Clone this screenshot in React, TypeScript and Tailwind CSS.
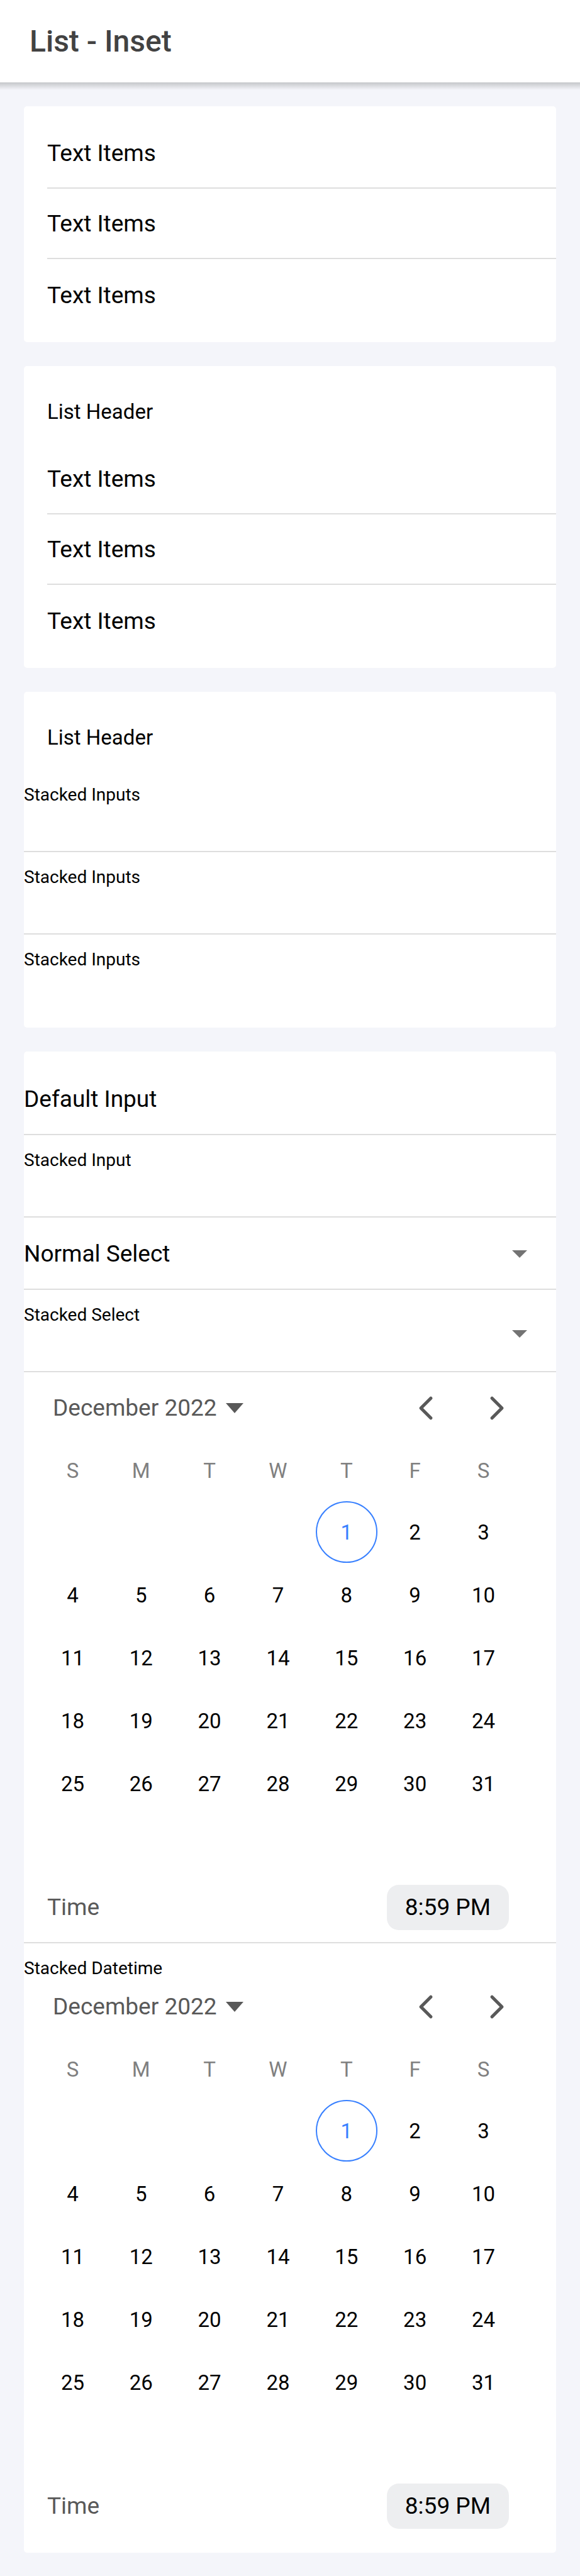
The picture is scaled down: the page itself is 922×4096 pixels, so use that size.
import React, { useId } from "react";

const WEEKDAYS = ["S", "M", "T", "W", "T", "F", "S"];

const WEEKS: (number | null)[][] = [
  [null, null, null, null, 1, 2, 3],
  [4, 5, 6, 7, 8, 9, 10],
  [11, 12, 13, 14, 15, 16, 17],
  [18, 19, 20, 21, 22, 23, 24],
  [25, 26, 27, 28, 29, 30, 31],
  [null, null, null, null, null, null, null],
];

const TODAY = 1;

function InsetList({ children }: { children: React.ReactNode }) {
  return <section className="rounded-[5px] bg-white py-[19px]">{children}</section>;
}

function ListHeader({ children }: { children: React.ReactNode }) {
  return <h2 className="flex h-[105px] items-center pt-0.5 pl-[37px] text-[33px] leading-10">{children}</h2>;
}

function TextItems() {
  return (
    <ul className="pl-[37px]">
      {[0, 1, 2].map((n) => (
        <li
          key={n}
          className="flex h-28 items-center border-b-2 border-[#dedede] pt-0.5 last:h-[113px] last:border-b-0"
        >
          Text Items
        </li>
      ))}
    </ul>
  );
}

function StackedLabel({ htmlFor, children }: { htmlFor?: string; children: React.ReactNode }) {
  return (
    <label htmlFor={htmlFor} className="block pt-6 text-[28px] leading-8">
      {children}
    </label>
  );
}

function StackedInput({ label }: { label: string }) {
  const id = useId();
  return (
    <div className="border-b-2 border-[#dedede] last:border-b-0">
      <StackedLabel htmlFor={id}>{label}</StackedLabel>
      <input id={id} type="text" className="block h-[73px] w-full bg-transparent outline-none" />
    </div>
  );
}

function Caret() {
  return (
    <svg viewBox="0 0 24 12" className="pointer-events-none h-3 w-6 shrink-0 text-[#737373]" aria-hidden="true">
      <path d="M0 0h24L12 12z" fill="currentColor" />
    </svg>
  );
}

function SelectBox({ id }: { id: string }) {
  return (
    <select id={id} defaultValue="" className="h-full min-w-0 flex-1 appearance-none bg-transparent outline-none">
      <option value=""></option>
    </select>
  );
}

function Chevron({ points }: { points: string }) {
  return (
    <svg viewBox="0 0 512 512" className="size-14" fill="none" stroke="currentColor" aria-hidden="true">
      <polyline points={points} strokeWidth="48" strokeLinecap="round" strokeLinejoin="round" />
    </svg>
  );
}

function Datetime() {
  return (
    <div className="text-[#595959]">
      <div className="flex h-[114px] items-center pr-[38px] pl-[46px]">
        <button type="button" className="flex items-center gap-[14px]">
          December 2022
          <svg viewBox="0 0 28 16" className="h-4 w-7" aria-hidden="true">
            <path d="M0 0h28L14 16z" fill="currentColor" />
          </svg>
        </button>
        <div className="ml-auto flex">
          <button type="button" aria-label="Previous month" className="flex w-[113px] justify-center">
            <Chevron points="328 112 184 256 328 400" />
          </button>
          <button type="button" aria-label="Next month" className="flex w-[113px] justify-center">
            <Chevron points="184 112 328 256 184 400" />
          </button>
        </div>
      </div>
      <div className="pr-[61px] pl-[23px]">
        <table className="w-full table-fixed border-collapse text-[33px] leading-10">
          <thead>
            <tr>
              {WEEKDAYS.map((d, i) => (
                <th key={i} scope="col" className="h-[90px] p-0 pb-1 font-normal text-[#808080]">
                  {d}
                </th>
              ))}
            </tr>
          </thead>
          <tbody className="text-black">
            {WEEKS.map((week, i) => (
              <tr key={i}>
                {week.map((day, j) => (
                  <td key={j} className="h-[100px] p-0">
                    {day !== null && (
                      <button
                        type="button"
                        className={
                          day === TODAY
                            ? "mx-auto flex size-[98px] items-center justify-center rounded-full border-2 border-[#3880ff] pt-0.5 text-[#3880ff]"
                            : "mx-auto flex size-[98px] items-center justify-center rounded-full pt-0.5"
                        }
                      >
                        {day}
                      </button>
                    )}
                  </td>
                ))}
              </tr>
            ))}
          </tbody>
        </table>
      </div>
      <div className="flex items-center justify-between pt-[11px] pr-[75px] pb-[19px] pl-[37px]">
        <span>Time</span>
        <button type="button" className="h-[72px] rounded-[19px] bg-[#edeef0] px-[29px] text-black">
          8:59 PM
        </button>
      </div>
    </div>
  );
}

export default function App() {
  return (
    <div className="min-h-screen bg-[#f4f5fa] font-['Roboto',sans-serif] text-[37px] leading-[44px] text-black">
      <header className="flex h-[131px] items-center bg-white px-[47px]">
        <h1 className="text-[48px] leading-[56px] font-medium text-[#424242]">List - Inset</h1>
      </header>
      <div className="h-3 bg-linear-to-b from-[#c5c7ca] to-[#f4f5fa]" />
      <main className="flex flex-col gap-[38px] px-[38px] pt-[26px] pb-[37px]">
        <InsetList>
          <TextItems />
        </InsetList>
        <InsetList>
          <ListHeader>List Header</ListHeader>
          <TextItems />
        </InsetList>
        <InsetList>
          <ListHeader>List Header</ListHeader>
          <StackedInput label="Stacked Inputs" />
          <StackedInput label="Stacked Inputs" />
          <StackedInput label="Stacked Inputs" />
        </InsetList>
        <InsetList>
          <div className="flex h-[114px] items-center border-b-2 border-[#dedede] pt-0.5">
            <label htmlFor="default-input" className="pr-10">
              Default Input
            </label>
            <input id="default-input" type="text" className="h-full min-w-0 flex-1 bg-transparent outline-none" />
          </div>
          <StackedInput label="Stacked Input" />
          <div className="flex h-[115px] items-center border-b-2 border-[#dedede] pt-0.5 pr-[46px]">
            <label htmlFor="normal-select" className="pr-10">
              Normal Select
            </label>
            <SelectBox id="normal-select" />
            <Caret />
          </div>
          <div className="border-b-2 border-[#dedede]">
            <StackedLabel htmlFor="stacked-select">Stacked Select</StackedLabel>
            <div className="flex h-[73px] pt-2 pr-[46px]">
              <SelectBox id="stacked-select" />
              <Caret />
            </div>
          </div>
          <div className="border-b-2 border-[#dedede]">
            <Datetime />
          </div>
          <div>
            <div className="h-11">
              <StackedLabel>Stacked Datetime</StackedLabel>
            </div>
            <Datetime />
          </div>
        </InsetList>
      </main>
    </div>
  );
}
